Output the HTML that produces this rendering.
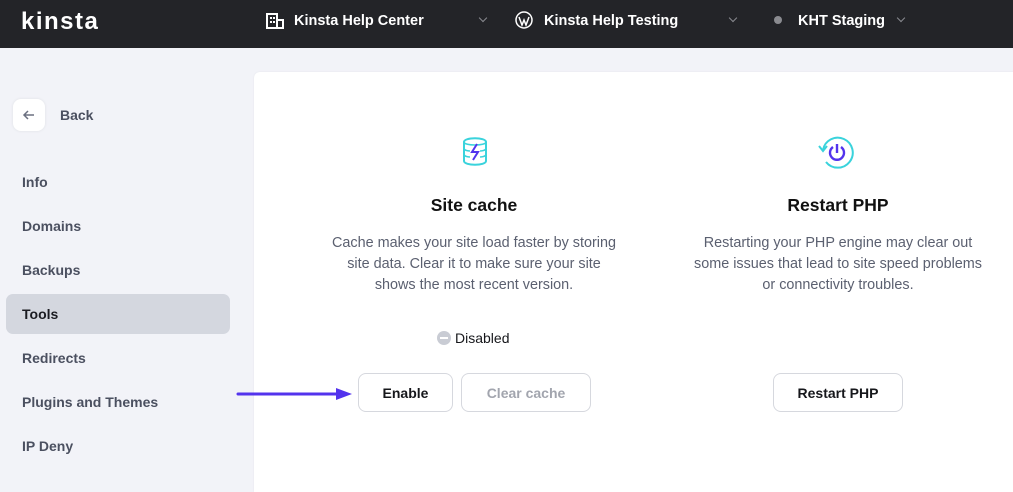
<!DOCTYPE html>
<html><head><meta charset="utf-8"><style>
*{margin:0;padding:0;box-sizing:border-box}
body{width:1013px;height:472px;overflow:hidden;background:#f2f3f8;font-family:"Liberation Sans",sans-serif;position:relative}
.hdr{position:absolute;left:0;top:0;width:1013px;height:48px;background:#232428;color:#fff}
.hdr .t{position:absolute;top:11px;font-size:14.5px;font-weight:bold;line-height:20px}
.chev{position:absolute;top:15px;width:6px;height:6px;border-right:1.5px solid #8a8b90;border-bottom:1.5px solid #8a8b90;transform:rotate(45deg)}
.side{position:absolute;left:22px;font-size:14px;font-weight:bold;color:#4b5060;line-height:20px}
.card{position:absolute;left:254px;top:72px;width:770px;height:420px;background:#fff;border-radius:6px 0 0 0;box-shadow:0 0 2px rgba(0,0,0,0.06)}
.title{position:absolute;font-size:17.5px;font-weight:bold;color:#111;line-height:24px;text-align:center}
.desc{position:absolute;font-size:14.4px;color:#5b6070;line-height:21px;text-align:center}
.btn{position:absolute;top:373px;height:39px;border:1px solid #d6d8de;border-radius:8px;background:#fff;font-size:14px;font-weight:bold;color:#16171b;display:flex;align-items:center;justify-content:center}
</style></head><body>
<div class="hdr">
<div class="t" style="left:21px;top:7px;font-size:24px;line-height:30px;letter-spacing:1.5px;font-weight:bold">kinsta</div>
<svg style="position:absolute;left:266px;top:13px" width="18" height="16" viewBox="0 0 18 16"><path d="M1 1h10v14H1z M11 7h6v8h-6" fill="none" stroke="#fff" stroke-width="2"/><rect x="4" y="4" width="2" height="2" fill="#fff"/><rect x="7" y="4" width="2" height="2" fill="#fff"/><rect x="4" y="8" width="2" height="2" fill="#fff"/><rect x="7" y="8" width="2" height="2" fill="#fff"/></svg>
<div class="t" style="left:294px">Kinsta Help Center</div>
<div class="chev" style="left:480px"></div>
<svg style="position:absolute;left:515px;top:11px" width="18" height="18" viewBox="0 0 18 18"><circle cx="9" cy="9" r="8" fill="none" stroke="#fff" stroke-width="1.5"/><path d="M4 6l3 8 2-5 2 5 3-8" fill="none" stroke="#fff" stroke-width="1.5"/></svg>
<div class="t" style="left:544px">Kinsta Help Testing</div>
<div class="chev" style="left:730px"></div>
<div style="position:absolute;left:774px;top:16px;width:8px;height:8px;border-radius:50%;background:#8a8b90"></div>
<div class="t" style="left:798px">KHT Staging</div>
<div class="chev" style="left:898px"></div>
</div>

<div style="position:absolute;left:13px;top:99px;width:32px;height:32px;background:#fff;border-radius:8px;box-shadow:0 0 3px rgba(0,0,0,0.08)"></div>
<svg style="position:absolute;left:22px;top:108px" width="14" height="14" viewBox="0 0 14 14"><path d="M12 7H2M6 3L2 7l4 4" fill="none" stroke="#6b7080" stroke-width="1.5"/></svg>
<div class="side" style="left:60px;top:105px">Back</div>
<div class="side" style="top:172px">Info</div>
<div class="side" style="top:216px">Domains</div>
<div class="side" style="top:260px">Backups</div>
<div style="position:absolute;left:6px;top:294px;width:224px;height:40px;background:#d4d7df;border-radius:7px"></div>
<div class="side" style="top:304px;color:#1b1c22">Tools</div>
<div class="side" style="top:348px">Redirects</div>
<div class="side" style="top:392px">Plugins and Themes</div>
<div class="side" style="top:436px">IP Deny</div>

<div class="card"></div>

<svg style="position:absolute;left:461px;top:136px" width="28" height="31" viewBox="0 0 28 31"><path d="M3 6c0-5 22-5 22 0v19c0 5-22 5-22 0z" fill="none" stroke="#3ad3dc" stroke-width="2"/><path d="M3 12c0 3 6 3 6 3M3 18c0 3 6 3 6 3M25 12c0 3-6 3-6 3M25 18c0 3-6 3-6 3M3 6c0 4 22 4 22 0" fill="none" stroke="#3ad3dc" stroke-width="1.6"/><path d="M16 8l-5 8h6l-5 8" fill="none" stroke="#5333ed" stroke-width="2"/></svg>
<svg style="position:absolute;left:817px;top:136px" width="38" height="33" viewBox="0 0 38 33"><path d="M6 14A15 15 0 1 1 9 26" fill="none" stroke="#3ad3dc" stroke-width="2"/><path d="M2 10l4 5 4-5" fill="none" stroke="#3ad3dc" stroke-width="2"/><path d="M16 11a7 7 0 1 0 8 0" fill="none" stroke="#5333ed" stroke-width="2.4"/><path d="M20 8v9" stroke="#5333ed" stroke-width="2.4"/></svg>

<div class="title" style="left:374px;width:200px;top:193px">Site cache</div>
<div class="title" style="left:738px;width:200px;top:193px">Restart PHP</div>
<div class="desc" style="left:290px;width:368px;top:233px">Cache makes your site load faster by storing<br>site data. Clear it to make sure your site<br>shows the most recent version.</div>
<div class="desc" style="left:654px;width:368px;top:233px">Restarting your PHP engine may clear out<br>some issues that lead to site speed problems<br>or connectivity troubles.</div>

<div style="position:absolute;left:437px;top:331px;width:14px;height:14px;border-radius:50%;background:#c9ccd4"></div>
<div style="position:absolute;left:440px;top:337px;width:8px;height:2px;background:#fff"></div>
<div style="position:absolute;left:455px;top:328px;font-size:14px;color:#16171b;line-height:20px">Disabled</div>

<div class="btn" style="left:358px;width:95px">Enable</div>
<div class="btn" style="left:461px;width:130px;color:#a2a5ae">Clear cache</div>
<div class="btn" style="left:773px;width:130px">Restart PHP</div>

<svg style="position:absolute;left:236px;top:387px" width="118" height="14" viewBox="0 0 118 14"><path d="M2 7H104" stroke="#5333ed" stroke-width="3" stroke-linecap="round"/><path d="M100 1l16 6-16 6z" fill="#5333ed"/></svg>
</body></html>
